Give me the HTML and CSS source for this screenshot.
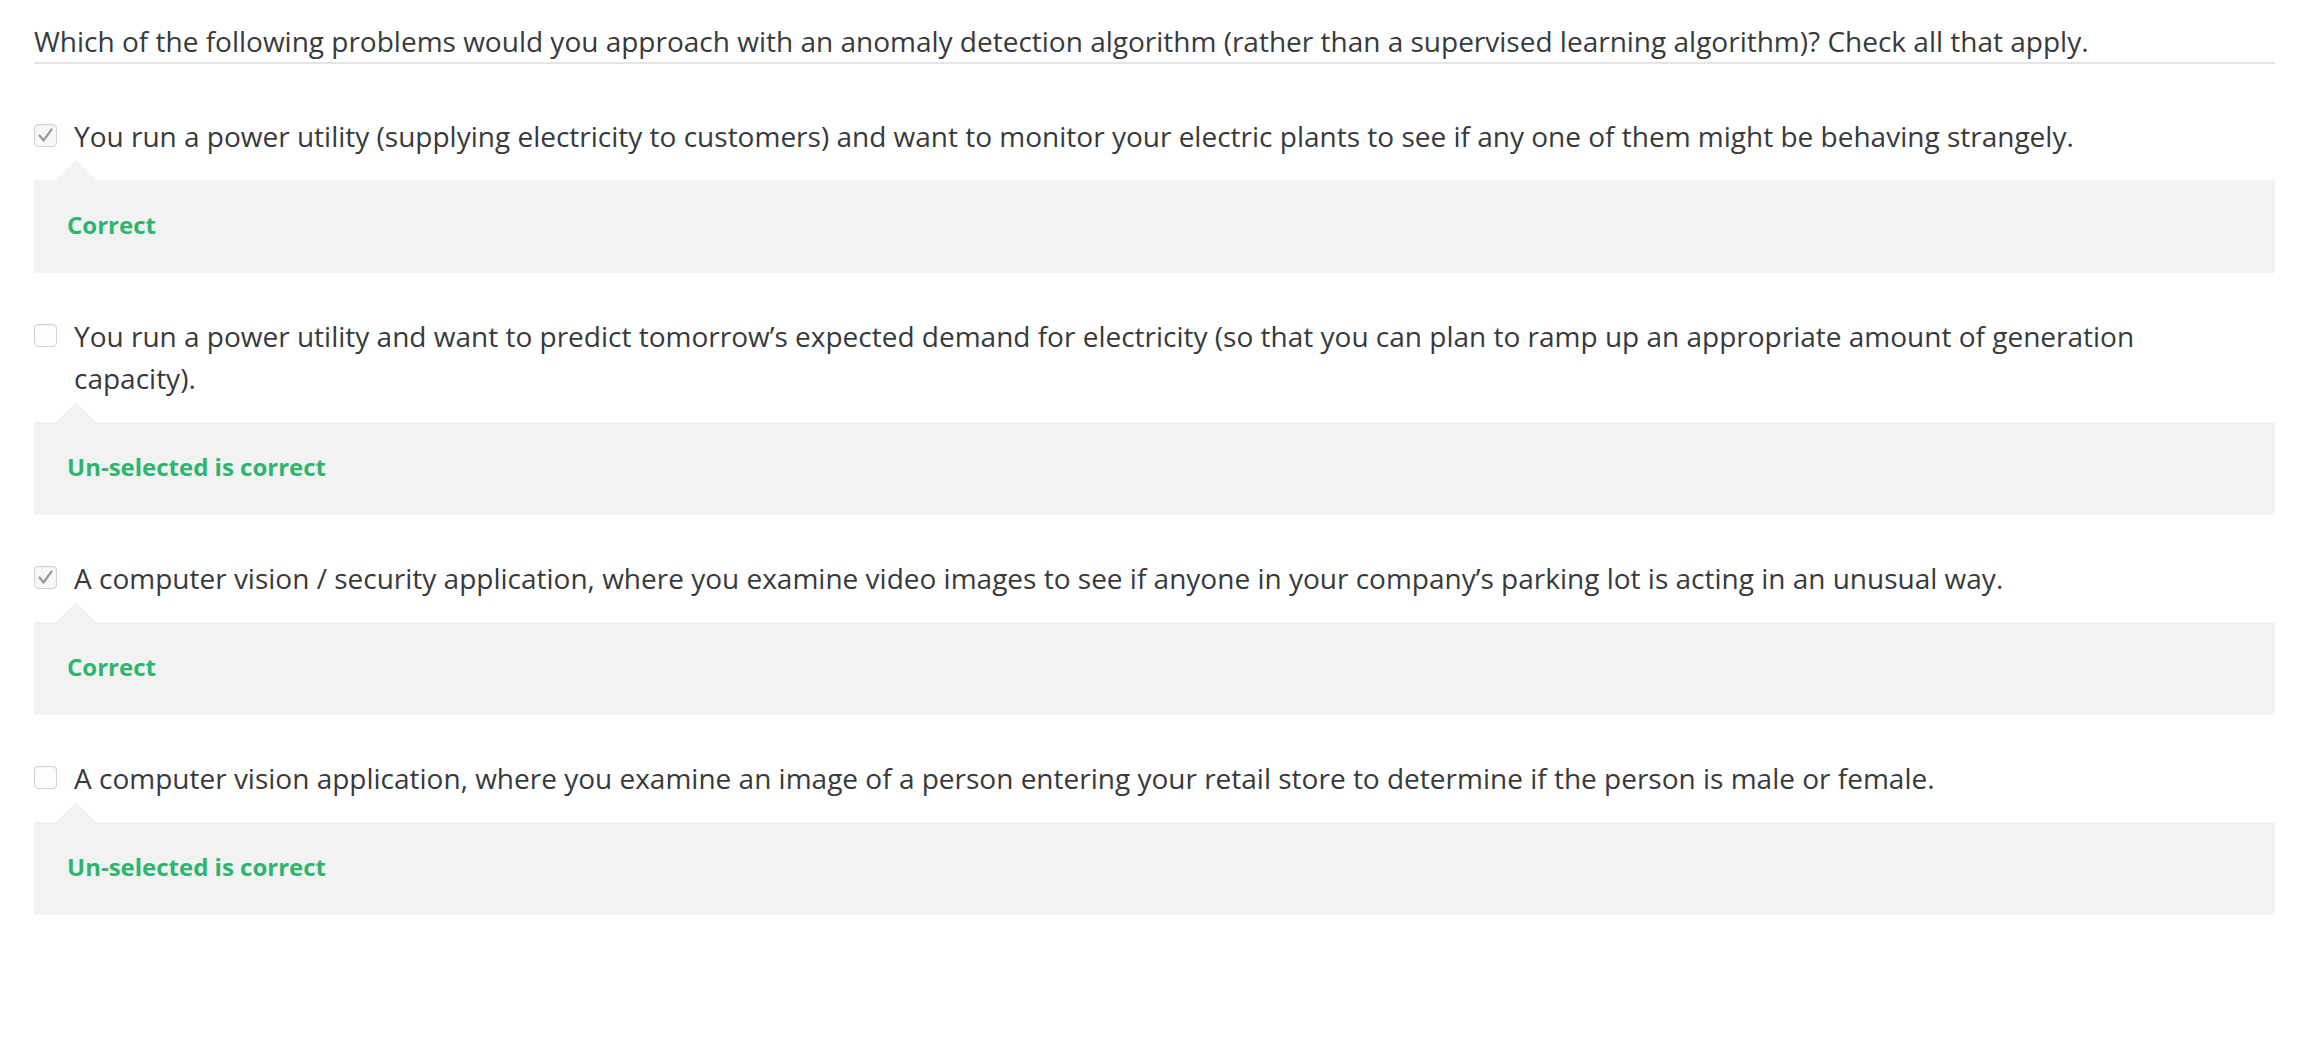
FILE: index.html
```html
<!DOCTYPE html>
<html lang="en">
<head>
<meta charset="utf-8">
<title>Quiz</title>
<link rel="stylesheet" href="styles.css">
</head>
<body>
<div class="quiz">
  <div class="question">Which of the following problems would you approach with an anomaly detection algorithm (rather than a supervised learning algorithm)? Check all that apply.</div>
  <div class="options">
    <div class="option">
      <div class="choice">
        <span class="cb checked"><svg viewBox="0 0 23 23" width="23" height="23"><path d="M5.5 11.5 L9.5 16.5 L17.5 5.5" fill="none" stroke="#9a9a9a" stroke-width="2.2" stroke-linecap="round" stroke-linejoin="round"/></svg></span>
        <span class="label">You run a power utility (supplying electricity to customers) and want to monitor your electric plants to see if any one of them might be behaving strangely.</span>
      </div>
      <div class="feedback">Correct</div>
    </div>
    <div class="option">
      <div class="choice">
        <span class="cb"></span>
        <span class="label">You run a power utility and want to predict tomorrow’s expected demand for electricity (so that you can plan to ramp up an appropriate amount of generation capacity).</span>
      </div>
      <div class="feedback">Un-selected is correct</div>
    </div>
    <div class="option">
      <div class="choice">
        <span class="cb checked"><svg viewBox="0 0 23 23" width="23" height="23"><path d="M5.5 11.5 L9.5 16.5 L17.5 5.5" fill="none" stroke="#9a9a9a" stroke-width="2.2" stroke-linecap="round" stroke-linejoin="round"/></svg></span>
        <span class="label">A computer vision / security application, where you examine video images to see if anyone in your company’s parking lot is acting in an unusual way.</span>
      </div>
      <div class="feedback">Correct</div>
    </div>
    <div class="option">
      <div class="choice">
        <span class="cb"></span>
        <span class="label">A computer vision application, where you examine an image of a person entering your retail store to determine if the person is male or female.</span>
      </div>
      <div class="feedback">Un-selected is correct</div>
    </div>
  </div>
</div>
</body>
</html>
```

FILE: styles.css
```css
html, body {
  margin: 0;
  padding: 0;
  background: #ffffff;
}

body {
  font-family: "Open Sans", "DejaVu Sans", sans-serif;
  color: #373a3c;
}

.quiz {
  width: 2241px;
  margin-left: 34px;
  padding-top: 20px;
}

.question {
  font-size: 28px;
  line-height: 42px;
  border-bottom: 2px solid #e5e5e5;
}

.options {
  margin-top: 51px;
}

.option + .option {
  margin-top: 42px;
}

.choice {
  display: flex;
  align-items: flex-start;
  gap: 17px;
}

.cb {
  flex: none;
  box-sizing: border-box;
  width: 23px;
  height: 23px;
  margin-top: 9px;
  border: 1px solid #d2d2d2;
  border-radius: 4px;
  background: #fdfdfd;
  box-shadow: inset 0 1px 2px rgba(0, 0, 0, 0.04);
  display: flex;
  align-items: center;
  justify-content: center;
}

.cb svg {
  display: block;
  margin: -1px;
}

.cb.checked {
  background: #f7f7f7;
}

.label {
  font-size: 28px;
  line-height: 42px;
  max-width: 2150px;
}

.feedback {
  position: relative;
  margin-top: 23px;
  background: #f2f2f2;
  padding: 29px 33px 32px;
  font-size: 24px;
  line-height: 32px;
  font-weight: 700;
  color: #2db56f;
}

.feedback::before {
  content: "";
  position: absolute;
  left: 22px;
  top: -20px;
  border-left: 20px solid transparent;
  border-right: 20px solid transparent;
  border-bottom: 20px solid #f2f2f2;
}
```
